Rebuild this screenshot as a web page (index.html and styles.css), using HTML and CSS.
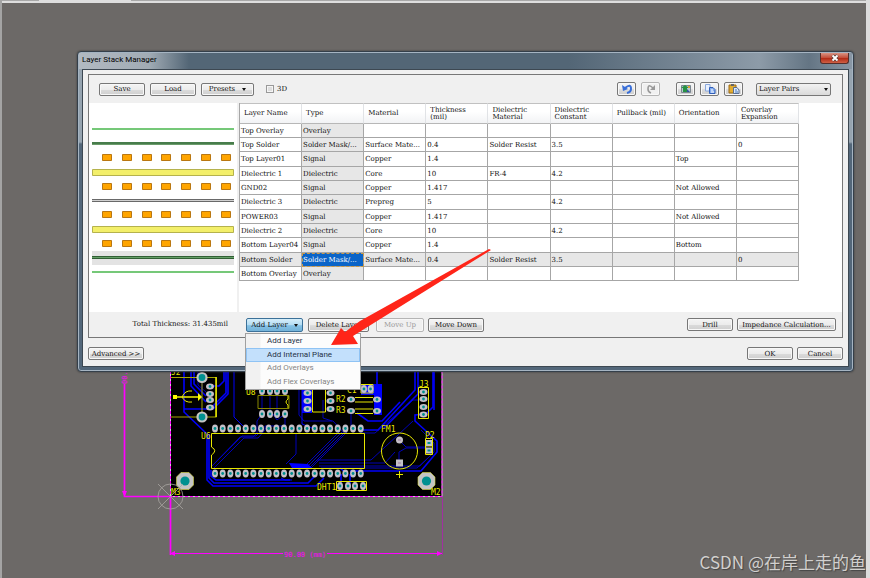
FILE: index.html
```html
<!DOCTYPE html>
<html lang="en">
<head>
<meta charset="utf-8">
<title>Layer Stack Manager</title>
<link rel="stylesheet" href="styles.css">
</head>
<body>
<main class="desktop">
  <svg class="board" viewBox="110 360 340 210" width="340" height="210" role="img" aria-label="Circuit board">
    <defs>
      <g id="pad"><ellipse rx="3" ry="4" fill="#c4c0c8"/><circle r="1.4" fill="#008f8f"/></g>
      <g id="padw"><ellipse rx="4" ry="3" fill="#c4c0c8"/><circle r="1.4" fill="#008f8f"/></g>
      <g id="hole"><circle r="5.6" fill="#c4c4c4"/><circle r="3.4" fill="#009090"/></g>
      <g id="mount"><path d="M-4-8.500H4L8.500-4V4L4 8.500H-4L-8.500 4V-4Z" fill="#c4c4c4" stroke="#d8d840" stroke-width=".6"/><circle r="4.600" fill="#009090"/></g>
      <g id="five"><use href="#pad"/><use href="#pad" x="7.670"/><use href="#pad" x="15.340"/><use href="#pad" x="23"/><use href="#pad" x="30.680"/></g>
      <g id="pins"><use href="#five"/><use href="#five" x="38.350"/><use href="#five" x="76.700"/><use href="#five" x="115.050"/></g>
    </defs>
    <rect x="170" y="360" width="272" height="137" fill="#000"/>
    <g fill="none" stroke="#0000b8" stroke-width="1">
      <path d="M212 466L242 436H256L260 432M214 468L244 438H258L265 430V426H285V415M262 414L257 421V433L253 437H240L211 467"/>
      <path d="M299 366V415L304 421H333L344 433L308 469M302 469L340 431M305 469L343 431M311 468L347 432M323 400V418L332 421M351 411V426M296 434V454L286 464M317 460H371L413 421M319 463H385L395 452M319 466H420L434 452V443L421 430M321 468H417L430 456M360 433H375L413 400H423M399 440L406 447H427M399 463V452L406 448H427"/>
      <path d="M198 366V385L206 392M202 378V390M262 392V414M270 392V414M277 392V414M273 414L277 420L285 414"/>
    </g>
    <g fill="none" stroke="#0000fa" stroke-width="1.600">
      <path d="M184 366V412L207 434V480L213 486H316L324 478"/>
      <path d="M209 434V478L214 483H308L315 476M211 470V476L216 480H290"/>
      <path d="M184 409H213L228 394V366M191 366V386L206 402M194 366V384L206 396M213 386H219L224 381V366M226 366V393L213 406"/>
      <path d="M234 366V417L245 428M281 478L285 480H292M302 366V424L312 428" stroke-width="1"/>
      <path d="M415 366V390L378 430H362M418 366V394L384 428M431 366L433 372V407L426 414L415 415V421L437 441V452L421 471H350"/>
      <path d="M357 413L368 421H382L400 402M377 366V386M434 366V410"/>
      <path d="M340 468L346 473M341 474V486M350 474V484"/>
    </g>
    <g fill="#0000ff">
      <path d="M302 382H312V413H302ZM361 384H382V415H374V395H361ZM326 382H334V388H326ZM289 463L292 468H312L308 464Z"/>
    </g>
    <g fill="none" stroke="#e8e800" stroke-width="1">
      <path d="M171 377.500H216.500V417H171M202 378V417" stroke="#a5a500"/>
      <path d="M216 377V417" stroke-width="1.500"/>
      <path d="M174 397H199" stroke-width="1.600"/>
      <path d="M182 397Q185 390 192 391M182 397Q185 403 192 402"/>
      <path d="M211.500 447V433.500H364.500V468.500H211.500V455Q218 450.500 211.500 447"/>
      <path d="M258 395.500H289V408.500H258Z" stroke="#888800"/><path d="M288 396V399Q284 402 288 405V408"/>
      <path d="M312.500 382V412H325.500V382"/>
      <path d="M361 384.500H373V393H361ZM355 397.500H373M355 402H373M355 409H373M355 413.500H373"/>
      <path d="M418.500 387.500H428.500V418.500H418.500ZM419 371.500H428M425.500 438.500H432.500V454.500H425.500ZM425 446H433M336.500 481.500H366.500V490.500H336.500Z"/>
      <circle cx="399.500" cy="451" r="18"/><path d="M399.500 471V478M396 474.500H403"/>
    </g>
    <path d="M173 395H177V399H173ZM198 393L202 397L198 401Z" fill="#ff0"/>
    <use href="#hole" x="202" y="377.500"/><use href="#hole" x="202" y="417"/>
    <use href="#padw" x="210" y="386.500"/><use href="#padw" x="210" y="394"/><use href="#padw" x="210" y="400"/><use href="#padw" x="210" y="407.500"/>
    <use href="#pad" x="262" y="391"/><use href="#pad" x="270" y="391"/><use href="#pad" x="277" y="391"/><use href="#pad" x="285" y="391"/>
    <use href="#pad" x="262" y="414"/><use href="#pad" x="270" y="414"/><use href="#pad" x="277" y="414"/><use href="#pad" x="285" y="414"/>
    <use href="#pins" x="215" y="428.500"/><use href="#pins" x="215" y="473.500"/>
    <g transform="translate(307.500 393)"><use href="#padw"/><use href="#padw" y="8"/><use href="#padw" y="16"/><use href="#padw" x="23"/><use href="#padw" x="23" y="8"/><use href="#padw" x="23" y="16"/></g>
    <use href="#padw" x="351" y="399.500"/><use href="#padw" x="377" y="399.500"/><use href="#padw" x="351" y="411"/><use href="#padw" x="377" y="411"/>
    <use href="#pad" x="364" y="389"/><use href="#pad" x="370.500" y="389"/>
    <use href="#padw" x="423.500" y="392"/><use href="#padw" x="423.500" y="399"/><use href="#padw" x="423.500" y="407"/><use href="#padw" x="423.500" y="414.500"/>
    <circle cx="399.500" cy="440" r="3.500" fill="#c4c0c8"/><rect x="396" y="459.500" width="7" height="7" fill="#c4c0c8"/><path d="M398 440H401M398 463H401" stroke="#a27ba2"/>
    <rect x="426" y="440" width="6" height="6" fill="#c4c0c8"/><rect x="426" y="447.500" width="6" height="6" fill="#c4c0c8"/><path d="M427.500 443H430.500M427.500 450.500H430.500" stroke="#008f8f" stroke-width="2"/>
    <use href="#pad" x="340" y="486"/><use href="#pad" x="348" y="486"/><use href="#pad" x="355" y="486"/><use href="#pad" x="363" y="486"/>
    <use href="#mount" x="185" y="481"/><use href="#mount" x="426.500" y="481"/>
    <g class="silk">
      <text x="171" y="375">J2</text><text x="201" y="439">U6</text><text x="246" y="395">U8</text><text x="336" y="402">R2</text><text x="336" y="413">R3</text><text x="347" y="393">C1</text><text x="419" y="387">J3</text><text x="381" y="432">FM1</text><text x="425" y="438">P2</text><text x="317" y="490">DHT1</text><text x="171" y="495">M3</text><text x="431" y="495">M2</text>
    </g>
    <g fill="none" stroke="#d8c8d8"><path d="M170.500 366V496.500H442V366"/><path d="M170.500 366V496.500H442V366" stroke="#f0f" stroke-dasharray="3 2"/></g>
    <g stroke="#f0f" fill="none"><path d="M124.500 384V496.500H170M170.500 497V555" stroke-width="1.700"/><path d="M170 553.500H283M327 553.500H442"/><path d="M442.500 497V555" stroke="#a030a0"/></g>
    <path d="M122 491L124.500 497L127 491ZM170 553.500L175 551V556ZM442 553.500L437 551V556Z" fill="#f0f"/>
    <g fill="none" stroke="#aaa6a2" stroke-width=".8"><circle cx="170.500" cy="496.500" r="12.500"/><path d="M158 484L183 509M183 484L158 509"/></g>
    <text class="measure" x="284" y="557">90.00 (mm)</text>
    <text class="measure" transform="translate(127 384) rotate(-90)">00.</text>
  </svg>

  <section class="window" aria-label="Layer Stack Manager">
    <header class="titlebar"><h1>Layer Stack Manager</h1>
      <button class="close" aria-label="Close"><svg viewBox="0 0 10 8" width="10" height="8"><path d="M2.500 1.500L7.500 6.500M7.500 1.500L2.500 6.500" stroke="#593f3b" stroke-width="3.400"/><path d="M2.500 1.500L7.500 6.500M7.500 1.500L2.500 6.500" stroke="#fff" stroke-width="1.800"/></svg></button>
    </header>
    <div class="client">
      <div class="panel">
        <div class="toolbar">
          <button class="btn medium">Save</button>
          <button class="btn medium">Load</button>
          <button class="btn presets">Presets <span class="caret"></span></button>
          <label class="check"><input type="checkbox"> 3D</label>
          <div class="tools">
            <button class="btn tool" aria-label="Undo"><svg viewBox="0 0 12 10"><path d="M4 4Q10-1 10 5Q10 8 6 9" fill="none" stroke="#386ed8" stroke-width="2"/><path d="M1 1L2 7L7 5Z" fill="#386ed8"/></svg></button>
            <button class="btn tool disabled" aria-label="Redo" disabled><svg viewBox="0 0 12 10"><path d="M8 4Q3-1 3 5Q3 8 6 9" fill="none" stroke="#999" stroke-width="1.600"/><path d="M10 1V6H5Z" fill="#999"/></svg></button>
            <button class="btn tool import" aria-label="Import"><svg viewBox="0 0 12 10"><path d="M1.500 1.500H10.500V8.500H1.500Z" fill="#b6c9d0" stroke="#7b8790"/><path d="M5 1L9 4H7V8H3V4H1Z" fill="#279244"/><path d="M8 2H10V4H8Z" fill="#e2a334"/><path d="M7 5L10 8H7Z" fill="#334fa0"/></svg></button>
            <button class="btn tool" aria-label="Copy"><svg viewBox="0 0 12 10"><path d="M1.500.5H6V7H1.500Z" fill="#e8f1ff" stroke="#8ba8dc"/><path d="M5.500 3.500H9L11 5.500V9.500H5.500Z" fill="#83adf0" stroke="#315fb9"/><path d="M7 6H9M7 8H10" stroke="#fff"/></svg></button>
            <button class="btn tool" aria-label="Paste"><svg viewBox="0 0 12 10"><path d="M1 1H8V9H1Z" fill="#e3ad30" stroke="#9c6b16"/><path d="M3 0H6V2H3Z" fill="#666"/><path d="M5.500 3.500H9L11 6V9.500H5.500Z" fill="#dce8fa" stroke="#596e91"/><path d="M7 6H9M7 8H10" stroke="#477abf"/></svg></button>
          </div>
          <div class="select"><select aria-label="Stack style"><option>Layer Pairs</option></select><span class="caret"></span></div>
        </div>
        <div class="stack">
          <svg class="layers" viewBox="0 0 148 209" width="148" height="209" role="img" aria-label="Layer stack preview">
            <defs><g id="copper"><path d="M13.500.5h9v6h-9zM33.500.5h9v6h-9zM53.500.5h9v6h-9zM72.500.5h9v6h-9zM92.500.5h9v6h-9zM112.500.5h9v6h-9zM132.500.5h9v6h-9z" fill="#ffa500" stroke="#b97712"/></g></defs>
            <path d="M3 26H145" stroke="#75c878" stroke-width="2"/>
            <path d="M3 40.500H145" stroke="#477c4b" stroke-width="3"/><path d="M3 41.500H145" stroke="#6b9c6b"/>
            <use href="#copper" y="51"/>
            <path d="M3.500 66.500H144.500V72.500H3.500Z" fill="#f3ef6a" stroke="#b5b24d"/>
            <use href="#copper" y="80"/>
            <path d="M3 97.500H145" stroke="#696969" stroke-width="3"/><path d="M3 97.500H145" stroke="#d0d0d0"/>
            <use href="#copper" y="108"/>
            <path d="M3.500 123.500H144.500V129.500H3.500Z" fill="#f3ef6a" stroke="#b5b24d"/>
            <use href="#copper" y="137"/>
            <path d="M3 148H145V162H3Z" fill="#e3e3e3"/><path d="M3 154.500H145" stroke="#315f35" stroke-width="3"/><path d="M3 154.500H145" stroke="#65a068"/>
            <path d="M3 169H145" stroke="#75c878" stroke-width="2"/>
          </svg>
          <div class="sheet">
            <table>
              <thead><tr><th>Layer Name</th><th>Type</th><th>Material</th><th>Thickness<br>(mil)</th><th>Dielectric<br>Material</th><th>Dielectric<br>Constant</th><th>Pullback (mil)</th><th>Orientation</th><th>Coverlay<br>Expansion</th></tr></thead>
              <tbody>
                <tr><td>Top Overlay</td><td>Overlay</td><td></td><td></td><td></td><td></td><td></td><td></td><td></td></tr>
                <tr><td>Top Solder</td><td>Solder Mask/...</td><td>Surface Mate...</td><td>0.4</td><td>Solder Resist</td><td>3.5</td><td></td><td></td><td>0</td></tr>
                <tr><td>Top Layer01</td><td>Signal</td><td>Copper</td><td>1.4</td><td></td><td></td><td></td><td>Top</td><td></td></tr>
                <tr><td>Dielectric 1</td><td>Dielectric</td><td>Core</td><td>10</td><td>FR-4</td><td>4.2</td><td></td><td></td><td></td></tr>
                <tr><td>GND02</td><td>Signal</td><td>Copper</td><td>1.417</td><td></td><td></td><td></td><td>Not Allowed</td><td></td></tr>
                <tr><td>Dielectric 3</td><td>Dielectric</td><td>Prepreg</td><td>5</td><td></td><td>4.2</td><td></td><td></td><td></td></tr>
                <tr><td>POWER03</td><td>Signal</td><td>Copper</td><td>1.417</td><td></td><td></td><td></td><td>Not Allowed</td><td></td></tr>
                <tr><td>Dielectric 2</td><td>Dielectric</td><td>Core</td><td>10</td><td></td><td>4.2</td><td></td><td></td><td></td></tr>
                <tr><td>Bottom Layer04</td><td>Signal</td><td>Copper</td><td>1.4</td><td></td><td></td><td></td><td>Bottom</td><td></td></tr>
                <tr class="selected"><td>Bottom Solder</td><td class="current">Solder Mask/...</td><td>Surface Mate...</td><td>0.4</td><td>Solder Resist</td><td>3.5</td><td></td><td></td><td>0</td></tr>
                <tr><td>Bottom Overlay</td><td>Overlay</td><td></td><td></td><td></td><td></td><td></td><td></td><td></td></tr>
              </tbody>
            </table>
          </div>
        </div>
        <div class="actions">
          <span class="total">Total Thickness: 31.435mil</span>
          <div class="dropdown">
            <button class="btn add">Add Layer <span class="caret"></span></button>
            <div class="menu" role="menu">
              <button role="menuitem">Add Layer</button>
              <button role="menuitem" class="active">Add Internal Plane</button>
              <button role="menuitem" disabled>Add Overlays</button>
              <button role="menuitem" disabled>Add Flex Coverlays</button>
            </div>
          </div>
          <button class="btn delete">Delete Layer</button>
          <button class="btn up disabled" disabled>Move Up</button>
          <button class="btn down">Move Down</button>
          <div class="extra"><button class="btn medium">Drill</button><button class="btn impedance">Impedance Calculation...</button></div>
        </div>
      </div>
      <footer class="footer"><button class="btn advanced">Advanced &gt;&gt;</button><button class="btn medium ok">OK</button><button class="btn medium">Cancel</button></footer>
    </div>
  </section>
  <svg class="arrow" viewBox="0 0 160 98" width="160" height="98" aria-hidden="true"><path d="M158 0L160 1L22 87L27 95L0 96L10 79L14 83L29 72Z" fill="#ff2519"/></svg>
  <p class="watermark">CSDN @在岸上走的鱼</p>
</main>
</body>
</html>
```
FILE: styles.css
```css
* { box-sizing: border-box; }
body { margin: 0; font: 7px/8px "DejaVu Serif", serif; color: #111; }
button, select, input { margin: 0; font: inherit; color: inherit; }
.desktop {
  position: relative;
  min-height: 100vh;
  overflow: hidden;
  background: #6c6967;
  border-left: 2px solid #a4a4a4;
  border-right: 4px solid #dcdcdc;
}
.desktop::before {
  content: "";
  display: block;
  height: 3px;
  background: linear-gradient(90deg, #a8a8a8 37px, #dedede 37px 129px, #a8a8a8 129px) top / 100% 1px no-repeat #dedede;
}
.board { position: absolute; left: 108px; top: 360px; }
.silk { fill: #e8e800; font: 8px "DejaVu Sans Mono", monospace; }
.measure { fill: #f0f; font: 7px "DejaVu Sans Mono", monospace; }

.window {
  position: absolute;
  left: 75px;
  right: 12px;
  top: 51px;
  padding: 0 4px 4px;
  border: 1px solid #343f4a;
  border-radius: 4px;
  background: linear-gradient(#96a4b0 0 90px, #53677a 92px);
  box-shadow: inset 0 0 0 1px #a5b4c2, 0 0 2px #333;
}
.titlebar {
  display: flex;
  justify-content: space-between;
  height: 16px;
  margin: 1px -3px 0;
  padding-left: 3px;
  background: linear-gradient(90deg, #b2bac2, #a1abb4 70px, #536676 110px, #536676 490px, #8d9ba8 680px, #647584 730px, #8997a5);
}
h1 { margin: 0; font: 8px/14px Roboto, sans-serif; color: #000; }
.close {
  display: grid;
  place-items: center;
  width: 29px;
  height: 11px;
  margin-right: 3px;
  padding: 0;
  border: 1px solid #562e2a;
  border-top: 0;
  border-radius: 0 0 3px 3px;
  background: linear-gradient(#d99383, #c24a35 50%, #b42d18 55%, #d06045);
}
.client { padding: 4px 5px 6px; border: 1px solid #3d4852; background: #f0f0f0; }
.panel { border: 1px solid #777; }
.toolbar { display: flex; align-items: center; height: 28px; padding: 0 11px 0 10px; gap: 5px; }
.btn {
  display: inline-flex;
  flex: none;
  align-items: center;
  justify-content: center;
  height: 13px;
  padding: 0 4px;
  border: 1px solid #777;
  border-radius: 2px;
  background: linear-gradient(#f4f4f4, #ececec 50%, #dadada 55%, #cfcfcf);
  box-shadow: inset 0 0 0 1px #f8f8f8;
  white-space: nowrap;
}
.medium { width: 46px; }
.presets { width: 53px; gap: 7px; }
.caret { flex: none; border: 2px solid transparent; border-top: 3px solid #111; border-bottom: 0; }
.check { display: flex; align-items: center; gap: 3px; margin-left: 7px; }
.check input { appearance: none; width: 8px; height: 8px; border: 1px solid #999; background: #dedede; box-shadow: inset 0 0 0 1px #f5f5f5; }
.tools { display: flex; gap: 5px; margin-left: auto; }
.tool { width: 19px; height: 14px; padding: 0; }
.tool svg { width: 12px; height: 10px; }
.import { margin-left: 11px; }
.btn.disabled { color: #999; border-color: #b5b5b5; background: #f0f0f0; }
.select { position: relative; margin-left: 8px; }
.select select {
  appearance: none;
  display: block;
  width: 75px;
  height: 13px;
  padding: 0 2px;
  border: 1px solid #777;
  border-radius: 2px;
  background: linear-gradient(#f2f2f2, #dadada);
}
.select .caret { position: absolute; right: 3px; top: 5px; pointer-events: none; }

.stack { display: grid; grid-template-columns: 148px 1fr; gap: 2px; }
.layers { display: block; background: #fff; }
.sheet { background: #fff; }
table { width: 560px; table-layout: fixed; border-collapse: separate; border-spacing: 0; border-left: 1px solid #a6a6a6; }
th, td { overflow: hidden; padding: 0; text-align: left; font-weight: normal; white-space: nowrap; }
th {
  height: 21px;
  padding-left: 4px;
  line-height: 7px;
  border-top: 1px solid #c1c1c1;
  border-right: 1px solid #e1e3e6;
  border-bottom: 1px solid #b7b7b7;
  background: linear-gradient(#fff 40%, #f2f3f5);
}
td { height: 14px; padding-left: 1px; border-right: 1px solid #a6a6a6; border-bottom: 1px solid #a6a6a6; }
tr:nth-child(3n) td { height: 15px; }
td:nth-child(2), .selected td { background: #e7e7e7; }
.selected .current { color: #fff; background: #0a64c8; outline: 1px dashed #c99a4a; outline-offset: -1px; }

.actions { display: flex; align-items: flex-start; height: 25px; padding: 6px 6px 0 0; }
.total { width: 139px; line-height: 13px; text-align: right; white-space: nowrap; }
.dropdown { position: relative; margin-left: 18px; }
.actions .btn { height: 14px; }
.actions .extra .btn { height: 13px; }
.add { width: 57px; gap: 6px; border-color: #3c7199; background: linear-gradient(#d6eefa, #b3dcf3 50%, #85c2e6 55%, #73b2d8); box-shadow: none; }
.delete { width: 61px; margin-left: 5px; }
.up { width: 48px; margin-left: 7px; }
.down { width: 56px; margin-left: 4px; }
.extra { display: flex; gap: 4px; margin-left: auto; }
.impedance { width: 99px; }
.menu {
  position: absolute;
  z-index: 2;
  left: -1px;
  top: 15px;
  display: grid;
  grid-auto-rows: 1fr;
  width: 116px;
  height: 57px;
  border: 1px solid #a0a0a0;
  background: linear-gradient(90deg, #f1f1f1 14px, #fcfcfc 15px);
}
.menu button { padding: 0 0 0 20px; border: 1px solid transparent; background: none; text-align: left; font: 8px/10px Roboto, sans-serif; color: #263247; white-space: nowrap; }
.menu .active { border-color: #8fc3f4; background: #c3e0fc; }
.menu button:disabled { color: #858585; }
.footer { display: flex; gap: 4px; padding-top: 9px; }
.advanced { width: 56px; }
.ok { margin-left: auto; }
.arrow { position: absolute; z-index: 3; left: 329px; top: 249px; pointer-events: none; }
.watermark { position: absolute; right: 0; bottom: 4px; margin: 0; font: 17px/24px "Noto Sans CJK SC", sans-serif; color: #d2d0ce; text-shadow: 1px 1px 1px #444; white-space: nowrap; }
```
